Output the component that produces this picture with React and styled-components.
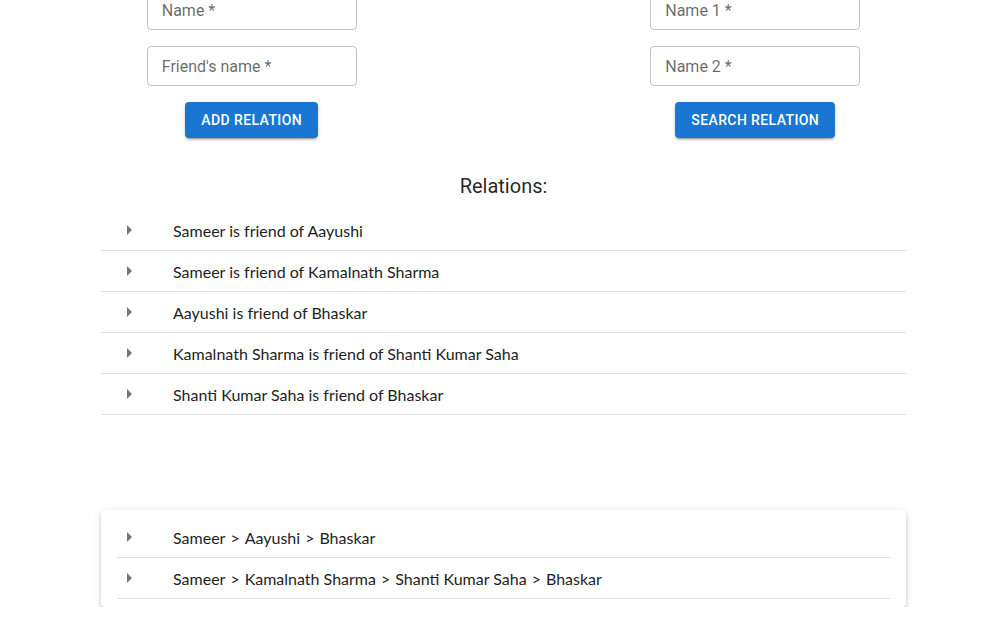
import React from 'react'
import styled, { createGlobalStyle } from 'styled-components'

const relations = [
  'Sameer is friend of Aayushi',
  'Sameer is friend of Kamalnath Sharma',
  'Aayushi is friend of Bhaskar',
  'Kamalnath Sharma is friend of Shanti Kumar Saha',
  'Shanti Kumar Saha is friend of Bhaskar',
]

const paths = [
  ['Sameer', 'Aayushi', 'Bhaskar'],
  ['Sameer', 'Kamalnath Sharma', 'Shanti Kumar Saha', 'Bhaskar'],
]

const Arrow = () => (
  <svg width="24" height="24" viewBox="0 0 24 24" fill="currentColor">
    <path d="M10 17l5-5-5-5v10z" />
  </svg>
)

export default function App() {
  return (
    <>
      <GlobalStyle />
      <Page>
        <Forms>
          <FormCol>
            <Field><span>Name *</span></Field>
            <Field><span>Friend's name *</span></Field>
            <Button>Add relation</Button>
          </FormCol>
          <FormCol>
            <Field><span>Name 1 *</span></Field>
            <Field><span>Name 2 *</span></Field>
            <Button>Search relation</Button>
          </FormCol>
        </Forms>
        <Title>Relations:</Title>
        <List>
          {relations.map((r) => (
            <Row key={r}>
              <Icon><Arrow /></Icon>
              <Text>{r}</Text>
            </Row>
          ))}
        </List>
        <Card>
          {paths.map((p) => (
            <Row key={p.join()} inset>
              <Icon><Arrow /></Icon>
              <Text>
                {p.map((name, i) => (
                  <React.Fragment key={name}>
                    {i > 0 && <Sep>&gt;</Sep>}
                    {name}
                  </React.Fragment>
                ))}
              </Text>
            </Row>
          ))}
        </Card>
      </Page>
    </>
  )
}

const GlobalStyle = createGlobalStyle`
  body {
    margin: 0;
    background: #ffffff;
    font-family: Roboto, "Liberation Sans", sans-serif;
    overflow: hidden;
  }
`

const Page = styled.div`
  margin-top: -10px;
  display: flex;
  flex-direction: column;
  align-items: center;
`

const Forms = styled.div`
  width: 100%;
  display: grid;
  grid-template-columns: 1fr 1fr;
`

const FormCol = styled.div`
  display: flex;
  flex-direction: column;
  align-items: center;
  gap: 16px;
`

const Field = styled.div`
  box-sizing: border-box;
  width: 210px;
  height: 40px;
  border: 1px solid rgba(0, 0, 0, 0.23);
  border-radius: 4px;
  padding: 0 14px;
  display: flex;
  align-items: center;
  font-size: 16px;
  color: rgba(0, 0, 0, 0.6);
`

const Button = styled.button`
  height: 36px;
  padding: 6px 16px;
  border: none;
  border-radius: 4px;
  background: #1976d2;
  color: #ffffff;
  font-family: Roboto, "Liberation Sans", sans-serif;
  font-weight: 500;
  font-size: 14px;
  letter-spacing: 0.4px;
  text-transform: uppercase;
  box-shadow: 0px 3px 1px -2px rgba(0,0,0,0.2), 0px 2px 2px 0px rgba(0,0,0,0.14), 0px 1px 5px 0px rgba(0,0,0,0.12);
`

const Title = styled.div`
  margin-top: 36px;
  font-size: 20px;
  line-height: 24px;
  color: rgba(0, 0, 0, 0.87);
`

const List = styled.div`
  width: 805px;
  padding: 8px 0;
  margin-top: 4px;
`

const Row = styled.div`
  display: flex;
  align-items: center;
  padding: 9px 16px 7px;
  margin: 0 ${(p) => (p.inset ? '16px' : '0')};
  padding-left: ${(p) => (p.inset ? '0' : '16px')};
  border-bottom: 1px solid rgba(0, 0, 0, 0.12);
`

const Icon = styled.div`
  min-width: 56px;
  height: 24px;
  margin-top: -2px;
  color: rgba(0, 0, 0, 0.54);
  display: flex;
  align-items: center;
`

const Text = styled.div`
  font-family: Lato, "Open Sans", sans-serif;
  font-size: 16px;
  line-height: 24px;
  color: #1e1e1e;
`

const Sep = styled.span`
  margin: 0 5px;
`

const Card = styled.div`
  width: 805px;
  margin-top: 87px;
  padding: 7px 0 8px;
  background: #fff;
  border-radius: 4px;
  box-shadow: 0px 3px 3px -2px rgba(0,0,0,0.2), 0px 3px 4px 0px rgba(0,0,0,0.14), 0px 1px 8px 0px rgba(0,0,0,0.12);
`
